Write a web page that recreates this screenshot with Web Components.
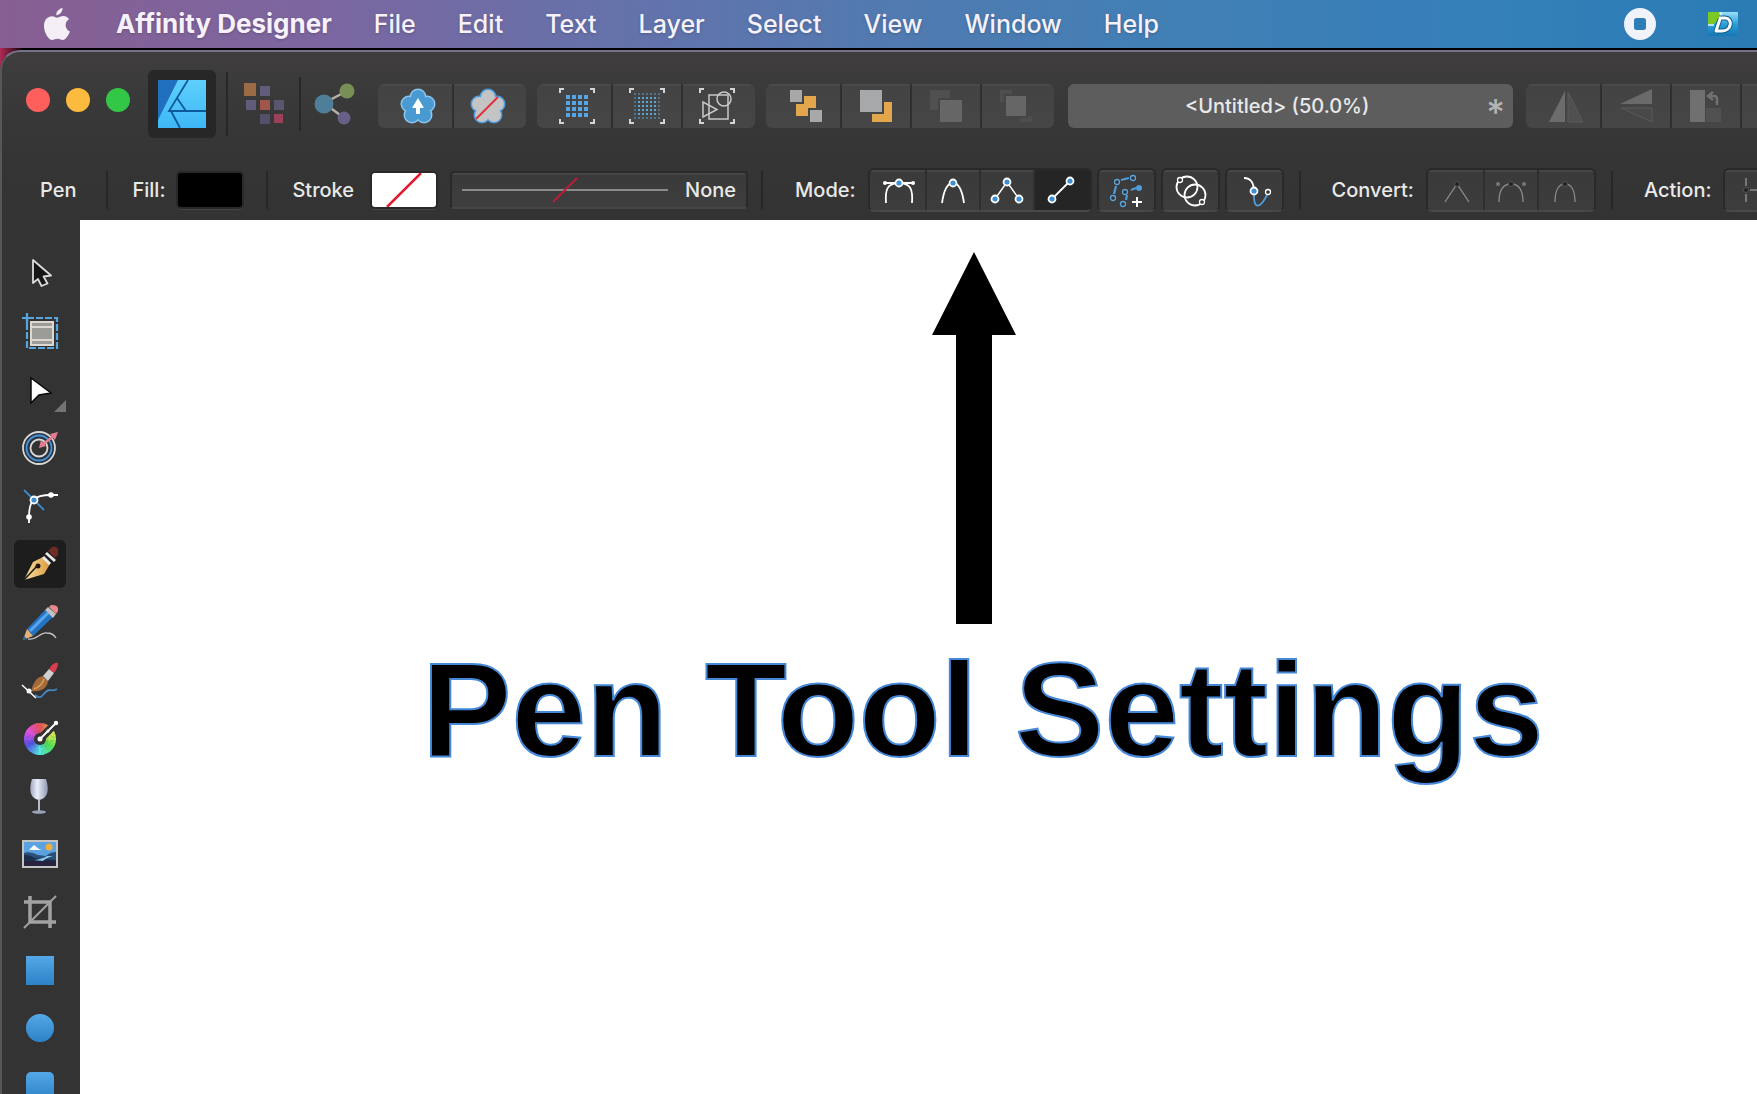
<!DOCTYPE html>
<html lang="en">
<head>
<meta charset="utf-8">
<title>Affinity Designer</title>
<style>
  html, body { height: 100%; }
  body {
    margin: 0;
    display: flex;
    flex-direction: column;
    overflow: hidden;
    background: linear-gradient(90deg, #b02a55, #000 24px);
    font-family: Inter, "Liberation Sans", sans-serif;
    color: #e9e9e9;
  }
</style>
</head>
<body>

<mac-menubar>
  <menu-item slot="logo" label="Apple"><app-icon name="apple"></app-icon></menu-item>
  <menu-item strong>Affinity Designer</menu-item>
  <menu-item>File</menu-item>
  <menu-item>Edit</menu-item>
  <menu-item>Text</menu-item>
  <menu-item>Layer</menu-item>
  <menu-item>Select</menu-item>
  <menu-item>View</menu-item>
  <menu-item>Window</menu-item>
  <menu-item>Help</menu-item>
  <menu-item slot="status" label="Stop recording"><app-icon name="stop"></app-icon></menu-item>
  <menu-item slot="status" label="Dash"><app-icon name="dash"></app-icon></menu-item>
</mac-menubar>

<app-window>
  <main-toolbar slot="toolbar"></main-toolbar>
  <context-bar slot="context"></context-bar>
  <tool-palette slot="tools"></tool-palette>
  <design-canvas></design-canvas>
</app-window>

<script>
const wheel = Array.from({ length: 60 }, (_, i) => {
  const a = (i * 6 - 90) * Math.PI / 180, b = ((i + 1) * 6 - 89) * Math.PI / 180;
  const p = (r, t) => (18 + r * Math.cos(t)).toFixed(2) + ' ' + (19 + r * Math.sin(t)).toFixed(2);
  return `<path fill="hsl(${i * 6} 78% 62%)" d="M18 19L${p(16, a)}A16 16 0 0 1 ${p(16, b)}Z"/>`;
}).join('');

const petals = [[18, 9], [27, 16], [24, 27], [12, 27], [9, 16]];
const flower = (fill, edge) => petals.map(([x, y]) => `<circle cx="${x}" cy="${y}" r="8.500" fill="${edge}"/>`).join('')
  + petals.map(([x, y]) => `<circle cx="${x}" cy="${y}" r="7" fill="${fill}"/>`).join('') + `<circle cx="18" cy="19" r="8" fill="${fill}"/>`;
const corners = '<path d="M1 5V1H5M31 1h4V5M35 31v4H31M5 35H1V31" fill="none" stroke="#d4d4d4" stroke-width="2"/>';
const grid = (n, s, step, o, f) => Array.from({ length: n * n }, (_, i) =>
  `<rect x="${o + (i % n) * step}" y="${o + Math.floor(i / n) * step}" width="${s}" height="${s}" ${f(i % n, Math.floor(i / n))}/>`).join('');
const dot = (x, y) => `<circle cx="${x}" cy="${y}" r="3.500" fill="#3f8fd2" stroke="#fff" stroke-width="1.800"/>`;
const ring = (x, y, c, r = 2.5) => `<circle cx="${x}" cy="${y}" r="${r}" fill="#333" stroke="${c}" stroke-width="1.300"/>`;
const blueGrad = '<linearGradient id="b" x2="0" y2="1"><stop stop-color="#55a8e6"/><stop offset="1" stop-color="#2b82c8"/></linearGradient>';

// name: [width, height, markup]
const ICONS = {
  apple: [28, 34, '<path fill="#f4eef6" d="M19.500 1c.300 3.500-2.800 7.200-6.200 7.200C12.900 4.800 16 1.600 19.500 1ZM26 12.200c-5 3-4.200 10 .9 12.200-1.500 4.300-4.400 8.500-7.300 8.500-2 0-2.900-1.200-5.200-1.200s-3.400 1.200-5.300 1.200C5.500 32.900 1 25.600 1 18.900c0-6.300 4-9.700 7.800-9.700 2.300 0 4.100 1.500 5.600 1.500 1.400 0 3.500-1.600 6.200-1.600 2 0 4.100 1 5.400 3.100Z"/>'],
  stop: [32, 32, '<path fill="#f0f4fa" fill-rule="evenodd" d="M16 0a16 16 0 1 1 0 32a16 16 0 0 1 0-32ZM12.500 10a2.500 2.500 0 0 0-2.500 2.500v7a2.500 2.500 0 0 0 2.500 2.500h7a2.500 2.500 0 0 0 2.500-2.500v-7a2.500 2.500 0 0 0-2.500-2.500Z"/>'],
  dash: [30, 24, '<defs><linearGradient id="g" x2="0" y2="1"><stop stop-color="#9be0fa"/><stop offset=".5" stop-color="#2ba0d8"/><stop offset="1" stop-color="#1678b4"/></linearGradient></defs><rect width="30" height="24" rx="1" fill="url(#g)"/><path fill="#7cc926" d="M0 0h11v7l-5 5H0Z"/><path d="M13 0v5M0 13h6" stroke="#e8f8ff" stroke-width="1.500"/><g fill="none" stroke-linejoin="round"><path d="M11 6h6c8 0 7 13-3 13H8L12 7" stroke="#0f5f90" stroke-width="5"/><path d="M11 6h6c8 0 7 13-3 13H8L12 7" stroke="#fff" stroke-width="3"/></g>'],
  designer: [48, 48, '<defs><linearGradient id="a" x2="0" y2="1"><stop stop-color="#5fd0fc"/><stop offset="1" stop-color="#3db8f6"/></linearGradient></defs><rect width="48" height="48" fill="url(#a)"/><path fill="#2170c0" d="M0 0H20L0 40Z"/><path d="M30 0 11 31H48M19 18l9 13M13 31l9 17" fill="none" stroke="#0c5a9c" stroke-width="1.800"/>'],
  pixel: [42, 44, '<rect x="1" y="1" width="12" height="13" fill="#9a6b44"/><rect x="17" y="4" width="10" height="10" fill="#615c7c"/><rect x="3" y="18" width="10" height="10" fill="#615c7c"/><rect x="17" y="18" width="10" height="10" fill="#a1564a"/><rect x="31" y="18" width="10" height="10" fill="#5a5670"/><rect x="17" y="32" width="10" height="10" fill="#54506c"/><rect x="31" y="32" width="9" height="9" fill="#99425a"/>'],
  exporter: [42, 42, '<path d="M10 20 33 8M10 20l20 15" stroke="#b5b0aa" stroke-width="2.500"/><circle cx="10" cy="21" r="9.500" fill="#4f7f98"/><circle cx="33" cy="8" r="7.500" fill="#789056"/><circle cx="30" cy="35" r="6.500" fill="#686087"/>'],
  flowerUp: [36, 36, flower('#4a9ad2', '#8ac6ee') + '<path fill="#fff" d="M18 10l6 10h-4v6h-4v-6h-4Z"/>'],
  flowerOff: [36, 36, flower('#c4c4c4', '#4c9ce0') + '<path d="M6 31 28 9" stroke="#e0303c" stroke-width="2"/>'],
  snapGrid: [36, 36, corners + grid(4, 4, 6, 7, () => 'fill="#54a6e6"')],
  snapDots: [36, 36, corners + grid(7, 2, 4, 5, (x, y) => `fill="#5da4d8" opacity="${x % 6 && y % 6 ? 1 : .5}"`)],
  snapShapes: [36, 36, corners + '<g fill="none" stroke="#c8c8c8" stroke-width="1.500"><path d="M10 7h19v24H10Z"/><circle cx="25" cy="11" r="7"/><path d="M4 14v15l14-7.500Z"/></g>'],
  toFront: [36, 36, '<g fill="#a6a8a9"><path d="M2 2h12v12H2ZM22 22h12v12H22Z"/></g><path fill="#e2a64c" d="M16 8h12v12h-8v8H8V16h8Z"/>'],
  forward: [36, 36, '<path fill="#e2a64c" d="M26 14h8v20H14v-8h12Z"/><path fill="#a6a8a9" d="M2 2h22v22H2Z"/>'],
  backward: [36, 36, '<path fill="#505050" d="M2 2h20v8H10v12H2Z"/><path fill="#666" d="M12 12h22v22H12Z"/>'],
  toBack: [36, 36, '<path fill="#4e4e4e" d="M2 2h12v4H6v8H2ZM22 34h12v-6h-4v2h-8Z"/><path fill="#666" d="M8 8h20v20H8Z"/>'],
  flipH: [36, 36, '<path fill="#6c6c6c" d="M17 3v31H1Z"/><path fill="#505050" stroke="#5a5a5a" d="M20 4v30H35Z"/>'],
  flipV: [36, 36, '<path fill="#6a6a6a" d="M34 1v15H2Z"/><path fill="#484848" stroke="#5a5a5a" d="M34 20v14L3 20Z"/>'],
  rotate: [36, 36, '<path fill="#707070" d="M2 2h15v32H2Z"/><path fill="#515151" d="M18 20h15v14H18Z"/><path d="M29 17v-6q0-3-3-3H21m4-4-5 4 5 4" fill="none" stroke="#707070" stroke-width="2.500"/>'],
  mPen: [36, 36, '<path d="M5 31c-1-13 1-20 13-20s14 7 13 20M4 11H32" fill="none" stroke="#fff" stroke-width="1.800"/><circle cx="4" cy="11" r="2" fill="#fff"/><circle cx="32" cy="11" r="2" fill="#fff"/>' + dot(18, 11)],
  mSmart: [36, 36, '<path d="M7 31C9 17 13 11 18 11s9 6 11 20" fill="none" stroke="#fff" stroke-width="1.800"/>' + dot(18, 11)],
  mPoly: [36, 36, '<path d="M6 27 18 10 30 27" fill="none" stroke="#fff" stroke-width="1.400"/>' + dot(18, 10) + dot(6, 27) + dot(30, 27)],
  mLine: [36, 36, '<path d="M9 27 27 9" stroke="#fff" stroke-width="1.800"/>' + dot(9, 27) + dot(27, 9)],
  addCurve: [36, 36, '<path d="M6 22 8 14M13 8 21 6M18 28l1-5M23 18l5-2" fill="none" stroke="#4f9cd8" stroke-width="2.200"/>' + ring(5, 26, '#5aa5de') + ring(9, 10, '#5aa5de') + ring(25, 6, '#5aa5de') + ring(15, 32, '#5aa5de') + ring(17, 20, '#5aa5de') + '<circle cx="31" cy="16" r="3" fill="#4f9cd8"/><path d="M29 25v10M24 30h10" stroke="#fff" stroke-width="2"/>'],
  circles: [36, 36, '<g fill="none" stroke="#fff" stroke-width="1.800"><circle cx="15" cy="15" r="10.500"/><circle cx="23" cy="23" r="10.500"/></g>' + ring(8, 8, '#fff') + ring(30, 30, '#fff')],
  rubber: [36, 36, '<path d="M8 6q10 0 10 14" fill="none" stroke="#fff" stroke-width="1.800"/><path d="M18 20c-1 18 6 18 14 1" fill="none" stroke="#4f9cd8" stroke-width="1.800"/>' + dot(18, 19) + ring(32, 20, '#fff')],
  cSharp: [36, 36, '<path d="M6 30 18 12 30 30" fill="none" stroke="#8c8c8c" stroke-width="1.300"/><circle cx="18" cy="12" r="2.500" fill="#222" stroke="#555"/>'],
  cSmooth: [36, 36, '<path d="M6 30c0-12 4-18 12-18s12 6 12 18" fill="none" stroke="#8c8c8c" stroke-width="1.300"/><g fill="#777"><circle cx="5" cy="12" r="2"/><circle cx="31" cy="12" r="2"/></g><circle cx="18" cy="12" r="2.500" fill="#222" stroke="#555"/>'],
  cSmart: [36, 36, '<path d="M8 30c0-12 4-18 10-18s10 6 10 18" fill="none" stroke="#8c8c8c" stroke-width="1.300"/><circle cx="18" cy="12" r="2.500" fill="#222" stroke="#555"/>'],
  breakCurve: [36, 36, '<path d="M10 6v8M10 22v8M14 18h12" stroke="#777" stroke-width="2"/><circle cx="10" cy="18" r="2.500" fill="#222" stroke="#555"/>'],
  move: [36, 36, '<path d="M11 4v23l5-4 3.500 7 6-2.500-4-7 7.500-1Z" fill="#161616" stroke="#dcdcdc" stroke-width="1.800" stroke-linejoin="round"/>'],
  artboard: [36, 36, '<path d="M5 4H35V34H5Z" fill="none" stroke="#56a4e0" stroke-width="2.200" stroke-dasharray="7 2"/><path d="M0 4H10M5-1V9" stroke="#56a4e0" stroke-width="2.200"/><path d="M9 8H31V31H9Z" fill="#9b9b98" stroke="#ddd9d0" stroke-width="2"/><path d="M9 13H31M9 26H31" stroke="#ddd9d0" stroke-width="1.800"/>'],
  node: [36, 36, '<path d="M9 6v25l8-8 12-2Z" fill="#fff" stroke="#0a0a0a" stroke-width="1.500"/><path d="M44 28v12H32Z" fill="#737373"/>'],
  contour: [36, 36, '<g fill="none" stroke-width="1.800"><circle cx="17" cy="18" r="16" stroke="#d8d8d8" fill="#2b3440"/><circle cx="17" cy="18" r="12.500" stroke="#4a94d4"/><circle cx="17" cy="18" r="8.500" stroke="#d8d8d8" fill="#333"/></g><path d="M20 15 33 5" stroke="#e87c90" stroke-width="2.500"/><path fill="#e87c90" d="M17 18l2-8 5 6ZM36 2l-8 2 5 6Z"/>'],
  corner: [36, 36, '<path d="M7 35V29C7 12 12 7 29 7h7" fill="none" stroke="#fff" stroke-width="1.800"/><path d="M2 2 22 22" stroke="#3f8ac8" stroke-width="1.800"/><circle cx="7" cy="29" r="2.800" fill="#fff"/><circle cx="29" cy="7" r="2.800" fill="#fff"/>' + dot(12, 12)],
  pen: [36, 36, '<defs><linearGradient id="n" x2="1"><stop stop-color="#fbe2a8"/><stop offset="1" stop-color="#d99a3c"/></linearGradient></defs><path d="M2 34 11 16 21 11 28 18 22 28Z" fill="url(#n)"/><path d="M2 34 15 20" stroke="#20180e" stroke-width="1.500"/><circle cx="16" cy="20" r="2.500" fill="#20180e"/><path d="m24 7 9 8M21 11l7 7" stroke="#e8e8e8" stroke-width="3"/><path d="m23 9 8 8" stroke="#222" stroke-width="1.500"/><path d="M26 5 30 1q6-1 6 3v5l-3 3Z" fill="#6e2d24"/>'],
  pencil: [36, 36, '<path d="M6 35c8 2 12-7 19-6q6 0 9 5" fill="none" stroke="#c4c4c4" stroke-width="1.300"/><path d="M5 25 23 6l8 7L11 32Z" fill="#2472c4"/><path d="M8 27 26 9" stroke="#5aa6ec" stroke-width="3"/><path d="M1 36 5 25l6 7Z" fill="#e3b27c"/><path d="M1 36l1-4 3 3Z" fill="#28689c"/><path d="m23 6 3-3 8 7-3 4Z" fill="#bfc0c2"/><path d="m27 3 2-2q8-1 7 6l-2 3Z" fill="#e8888a"/>'],
  brush: [36, 36, '<path d="M13 33c8 7 8-5 15-5q4 1 7-1" fill="none" stroke="#4488c0" stroke-width="1.800"/><path d="M9 29c2-7 5-14 12-15l5 5c-1 9-9 11-17 10Z" fill="#a56a3a"/><path d="M12 27q8-3 10-10" stroke="#d79c62" fill="none" stroke-width="1.500"/><path d="m21 14 6-7 5 4-6 8Z" fill="#d0d0d0"/><path d="m27 7 3-4q3-3 6-2 0 5-4 10Z" fill="#da3d4c"/><path d="M0 23 14 36" stroke="#fff" stroke-width="1.500"/><circle cx="7" cy="29" r="2.500" fill="#fff"/>'],
  wheel: [36, 36, wheel + '<circle cx="18" cy="19" r="6" fill="#333"/><path d="M18 19 35 2" stroke="#333" stroke-width="8"/><path d="M18 19 34 3" stroke="#fff" stroke-width="1.800"/><circle cx="18" cy="19" r="2.500" fill="#fff"/><circle cx="26" cy="11" r="1.500" fill="#fff"/><circle cx="34" cy="3" r="2.200" fill="#fff"/>'],
  glass: [36, 36, '<defs><linearGradient id="w" x2="1"><stop stop-color="#9ea5bc"/><stop offset=".4" stop-color="#eceffa"/><stop offset="1" stop-color="#8e97b4"/></linearGradient></defs><path d="M10 1h14c4 12 1 20-7 21-8-1-11-9-7-21Z" fill="url(#w)"/><path d="M17 22v11" stroke="#b4bacb" stroke-width="2"/><ellipse cx="17" cy="34" rx="7" ry="1.800" fill="#9aa2b8"/>'],
  image: [36, 36, '<path fill="#c4c4c4" d="M0 4h36v28H0Z"/><path fill="#5aa2e0" d="M2 6h32v24H2Z"/><path fill="#fff" d="M3 14h4l5-5 5 4 3 1Z"/><circle cx="27" cy="11" r="3.500" fill="#f0ae3c"/><path fill="#2a5078" d="M2 17q6-2 14 2l8 1q4-4 10-4v10H2Z"/><path fill="#1b2e4a" d="M2 19q7 0 10 3l22 2v4H2Z"/><path fill="#8cc8ee" d="M12 24q8-1 13-4h6q-7 2-10 5Z"/><path fill="#27223e" d="M2 25h32v5H2Z"/>'],
  crop: [36, 36, '<path d="M8 2V28H34M2 8H28V34" fill="none" stroke="#a2a2a2" stroke-width="3.500"/><path d="M2 34 34 2" stroke="#a2a2a2" stroke-width="2"/>'],
  rect: [36, 36, `<defs>${blueGrad}</defs><rect x="4" y="4" width="28" height="29" fill="url(#b)"/>`],
  ellipse: [36, 36, `<defs>${blueGrad}</defs><circle cx="18" cy="18" r="14" fill="url(#b)"/>`],
  rounded: [36, 36, `<defs>${blueGrad}</defs><rect x="4" y="4" width="28" height="28" rx="5" fill="url(#b)"/>`],
};

function define(name, html, setup) {
  const template = document.createElement('template');
  template.innerHTML = html;
  customElements.define(name, class extends HTMLElement {
    constructor() {
      super();
      this.attachShadow({ mode: 'open' }).append(template.content.cloneNode(true));
    }
    connectedCallback() { if (setup) setup(this, this.shadowRoot); }
  });
}

define('app-icon', '<style>:host{display:block;flex:none}span,svg{display:block;overflow:visible}</style><span></span>', (host, root) => {
  const [w, h, body] = ICONS[host.getAttribute('name')];
  root.querySelector('span').innerHTML = `<svg width="${w}" height="${h}" viewBox="0 0 ${w} ${h}" aria-hidden="true">${body}</svg>`;
});

define('menu-item', `
<style>
  :host { display: block; }
  button { all: unset; display: block; font-size: 25px; line-height: 32px; font-weight: 500; color: #f6f1fa; white-space: nowrap; text-shadow: 0 1px 3px #0003; }
  :host([strong]) button { font-size: 26px; font-weight: 700; }
</style>
<button type="button"><slot></slot></button>`, (host, root) => {
  if (host.hasAttribute('label')) root.querySelector('button').setAttribute('aria-label', host.getAttribute('label'));
});

define('mac-menubar', `
<style>
  :host { display: block; flex: none; }
  nav { display: flex; align-items: center; height: 48px; box-sizing: border-box; padding: 0 19px 0 43px; background: linear-gradient(90deg, #875f92 0%, #7c66a0 18%, #6671aa 34%, #527ab0 50%, #417fb5 66%, #3580b9 85%, #2a7bb4 100%); }
  .menus { display: flex; gap: 42px; margin-left: 45px; flex: 1; }
  .status { display: flex; align-items: center; gap: 52px; }
</style>
<nav aria-label="Menu bar">
  <slot name="logo"></slot>
  <div class="menus"><slot></slot></div>
  <div class="status"><slot name="status"></slot></div>
</nav>`);

define('app-window', `
<style>
  :host { display: flex; flex: 1; min-height: 0; margin-top: 2px; flex-direction: column; box-sizing: border-box; overflow: hidden; border-radius: 20px 0 0 0; border-top: 2px solid #77728a; border-left: 2px solid #575757; background: linear-gradient(#3f3d3d, #353535 100px, #333 170px); }
  .work { display: flex; flex: 1; min-height: 0; }
</style>
<slot name="toolbar"></slot>
<slot name="context"></slot>
<div class="work"><slot name="tools"></slot><slot></slot></div>`);

define('seg-group', `
<style>
  :host { display: flex; flex: none; height: 44px; border-radius: 6px; overflow: hidden; background: #2f2f2f; gap: 2px; --seg: 68px; --seg-bg: linear-gradient(#4a4a4a 2px, #434343 2px, #464646); --lead: 6px; --tail: 4px; }
  :host([compact]) { height: 40px; border: 2px solid #292929; border-bottom-color: #484848; --seg: 52px; --seg-bg: linear-gradient(#464646 2px, #3a3a3a 2px, #3d3d3d); --lead: 3px; --tail: 3px; }
  :host([solo]) { --seg: 55px; --lead: 0px; --tail: 0px; }
  ::slotted(:first-child) { padding-left: var(--lead); }
  ::slotted(:last-child) { padding-right: var(--tail); }
</style>
<slot></slot>`);

define('seg-button', `
<style>
  :host { display: flex; flex: none; background: var(--seg-bg); }
  :host([active]) { background: #252525; }
  button { all: unset; display: flex; align-items: center; justify-content: center; width: var(--seg); }
</style>
<button type="button"></button>`, (host, root) => {
  const b = root.querySelector('button');
  b.innerHTML = `<app-icon name="${host.getAttribute('icon')}"></app-icon>`;
  b.setAttribute('aria-label', host.getAttribute('label'));
  if (host.hasAttribute('active')) b.setAttribute('aria-pressed', 'true');
});

define('bar-rule', '<style>:host{display:block;flex:none;width:2px;height:38px;background:#272727}:host([tall]){height:64px}:host([medium]){height:54px}</style>');

define('main-toolbar', `
<style>
  :host { display: flex; flex: none; align-items: center; height: 108px; }
  button { all: unset; }
  .lights { display: flex; gap: 16px; padding: 0 18px 12px 24px; }
  .lights button { width: 24px; height: 24px; border-radius: 50%; }
  .close { background: #fe5f5c; } .min { background: #fcbb3f; } .zoom { background: #33c748; }
  .personas { display: flex; align-items: center; padding-bottom: 4px; margin-right: 22px; }
  .personas button { display: flex; }
  .personas .on { padding: 10px; border-radius: 6px; background: #272727; margin-right: 10px; }
  .pixel { padding: 0 14px 0 15px; }
  .export { padding-left: 13px; }
  .groups { display: flex; gap: 11px; }
  .title { flex: 1; min-width: 0; display: flex; align-items: center; height: 44px; box-sizing: border-box; padding: 0 8px 0 0; margin: 0 13px 0 14px; border-radius: 6px; background: #5d5d5d; }
  h1 { flex: 1; margin: 0; font-size: 20px; line-height: 24px; font-weight: 500; text-align: center; white-space: nowrap; }
  .dirty { font-size: 36px; line-height: 36px; height: 24px; color: #b4b4b4; font-weight: 500; }
  .more { flex: 0 0 231px; overflow: hidden; display: flex; }
</style>
<div class="lights"><button class="close" aria-label="Close"></button><button class="min" aria-label="Minimise"></button><button class="zoom" aria-label="Zoom"></button></div>
<div class="personas">
  <button class="on" aria-label="Designer persona"><app-icon name="designer"></app-icon></button>
  <bar-rule tall></bar-rule>
  <button class="pixel" aria-label="Pixel persona"><app-icon name="pixel"></app-icon></button>
  <bar-rule medium></bar-rule>
  <button class="export" aria-label="Export persona"><app-icon name="exporter"></app-icon></button>
</div>
<div class="groups">
  <seg-group><seg-button icon="flowerUp" label="Synchronise from selection"></seg-button><seg-button icon="flowerOff" label="Revert defaults"></seg-button></seg-group>
  <seg-group><seg-button icon="snapGrid" label="Show grid"></seg-button><seg-button icon="snapDots" label="Snap to grid"></seg-button><seg-button icon="snapShapes" label="Snapping"></seg-button></seg-group>
  <seg-group><seg-button icon="toFront" label="Move to front"></seg-button><seg-button icon="forward" label="Forward one"></seg-button><seg-button icon="backward" label="Back one"></seg-button><seg-button icon="toBack" label="Move to back"></seg-button></seg-group>
</div>
<div class="title"><h1>&lt;Untitled&gt; (50.0%)</h1><span class="dirty">*</span></div>
<div class="more"><seg-group><seg-button icon="flipH" label="Flip horizontal"></seg-button><seg-button icon="flipV" label="Flip vertical"></seg-button><seg-button icon="rotate" label="Rotate anticlockwise"></seg-button><seg-button icon="rotate" label="Rotate clockwise"></seg-button></seg-group></div>`);

define('context-bar', `
<style>
  :host { display: flex; flex: none; align-items: center; height: 60px; box-sizing: border-box; overflow: hidden; padding-left: 38px; font-size: 20px; line-height: 24px; font-weight: 500; white-space: nowrap; }
  button { all: unset; flex: none; }
  .swatch { width: 64px; height: 34px; border-radius: 3px; box-shadow: 0 0 0 2px #292929, 0 3px 0 #454545; }
  .fill { background: #000; margin-left: 13px; }
  .stroke { margin: 0 14px 0 18px; }
  svg { display: block; }
  .width { box-sizing: border-box; display: flex; align-items: center; justify-content: space-between; width: 298px; height: 38px; padding: 0 10px; border: 2px solid #2a2a2a; border-bottom-color: #464646; border-radius: 4px; background: linear-gradient(#464646 2px, #3a3a3a 2px, #3e3e3e); }
  .s1 { margin: 0 24px 0 30px; }
  .s2 { margin: 0 24px; }
  .s3 { margin: 0 32px 0 13px; }
  .modes { display: flex; gap: 5px; }
  .s4 { margin: 0 31px 0 15px; }
  .modes, .act { margin-left: 12px; }
</style>
<span>Pen</span>
<bar-rule class="s1"></bar-rule>
<label for="fill">Fill:</label><button id="fill" class="swatch fill"></button>
<bar-rule class="s2"></bar-rule>
<label for="stroke">Stroke</label>
<button id="stroke" class="swatch stroke"><svg width="64" height="34"><rect width="64" height="34" rx="3" fill="#fff"/><path d="M15 34 49 0" stroke="#e3182c" stroke-width="2.500"/></svg></button>
<button class="width" aria-label="Stroke style"><svg width="206" height="30"><path d="M0 15H206" stroke="#a5a5a5" stroke-width="1.300"/><path d="M91 27 115 3" stroke="#c01c3a" stroke-width="1.800"/></svg><span>None</span></button>
<bar-rule class="s3"></bar-rule>
<span>Mode:</span>
<div class="modes">
  <seg-group compact><seg-button icon="mPen" label="Pen mode"></seg-button><seg-button icon="mSmart" label="Smart mode"></seg-button><seg-button icon="mPoly" label="Polygon mode"></seg-button><seg-button icon="mLine" label="Line mode" active></seg-button></seg-group>
  <seg-group compact solo><seg-button icon="addCurve" label="Add new curve"></seg-button></seg-group>
  <seg-group compact solo><seg-button icon="circles" label="Preserve selection"></seg-button></seg-group>
  <seg-group compact solo><seg-button icon="rubber" label="Rubber band mode"></seg-button></seg-group>
</div>
<bar-rule class="s4"></bar-rule>
<span>Convert:</span>
<seg-group compact class="act"><seg-button icon="cSharp" label="Convert to sharp"></seg-button><seg-button icon="cSmooth" label="Convert to smooth"></seg-button><seg-button icon="cSmart" label="Convert to smart"></seg-button></seg-group>
<bar-rule class="s4"></bar-rule>
<span>Action:</span>
<seg-group compact class="act"><seg-button icon="breakCurve" label="Break curve"></seg-button></seg-group>`);

define('tool-button', `
<style>
  :host { display: flex; flex: none; height: 58px; align-items: center; }
  button { all: unset; display: flex; align-items: center; justify-content: center; width: 52px; height: 48px; border-radius: 6px; }
  :host([active]) button { background: #1d1d1d; }
</style>
<button type="button"></button>`, (host, root) => {
  const b = root.querySelector('button');
  b.innerHTML = `<app-icon name="${host.getAttribute('icon')}"></app-icon>`;
  b.setAttribute('aria-label', host.getAttribute('label'));
});

define('tool-palette', `
<style>
  :host { display: flex; flex: 0 0 78px; box-sizing: border-box; flex-direction: column; align-items: center; padding: 25px 2px 0 0; overflow: hidden; background: #333; }
</style>
<tool-button icon="move" label="Move"></tool-button>
<tool-button icon="artboard" label="Artboard"></tool-button>
<tool-button icon="node" label="Node"></tool-button>
<tool-button icon="contour" label="Contour"></tool-button>
<tool-button icon="corner" label="Corner"></tool-button>
<tool-button icon="pen" label="Pen" active></tool-button>
<tool-button icon="pencil" label="Pencil"></tool-button>
<tool-button icon="brush" label="Vector brush"></tool-button>
<tool-button icon="wheel" label="Fill"></tool-button>
<tool-button icon="glass" label="Transparency"></tool-button>
<tool-button icon="image" label="Place image"></tool-button>
<tool-button icon="crop" label="Vector crop"></tool-button>
<tool-button icon="rect" label="Rectangle"></tool-button>
<tool-button icon="ellipse" label="Ellipse"></tool-button>
<tool-button icon="rounded" label="Rounded rectangle"></tool-button>`);

// Artboard objects sit at their own document coordinates.
define('design-canvas', `
<style>
  :host { display: block; flex: 1; min-width: 0; position: relative; overflow: hidden; background: #fff; }
  svg { position: absolute; left: 852px; top: 32px; }
  p { position: absolute; left: 342px; top: 415px; margin: 0; font: 700 134px/150px "Liberation Sans", Arial, sans-serif; color: #000; white-space: nowrap; -webkit-text-stroke: 2px #4588d8; }
</style>
<svg width="84" height="372" viewBox="0 0 84 372" role="img" aria-label="Arrow"><path d="M42 0 84 83H60V372H24V83H0Z"/></svg>
<p>Pen Tool Settings</p>`);
</script>
</body>
</html>
